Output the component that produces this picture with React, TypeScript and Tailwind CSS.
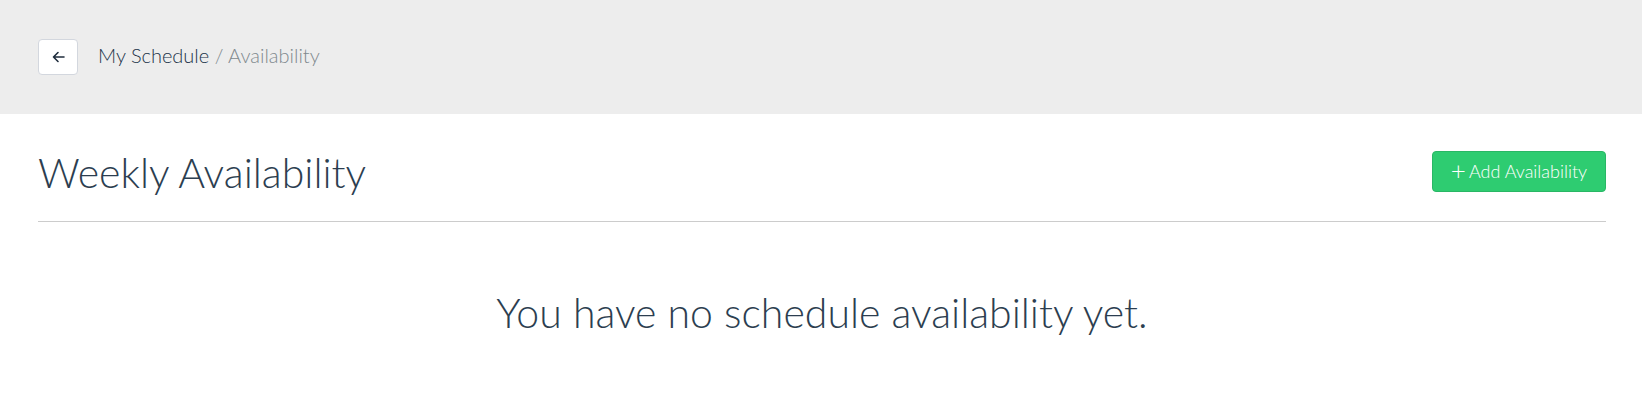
import React from "react";

export default function App() {
  return (
    <div className="min-h-[409px] bg-white" style={{ fontFamily: "Lato, 'Open Sans', sans-serif" }}>
      <div className="h-[114px] bg-[#ededed] flex items-center pl-[38px]">
        <button className="w-[40px] h-[36px] bg-white border border-[#d3d7de] rounded-[4px] flex items-center justify-center">
          <svg width="13" height="12" viewBox="0 0 13 12" fill="none" stroke="#1f2d3d" strokeWidth="1.6" strokeLinecap="round" strokeLinejoin="round">
            <path d="M12 6H1.5M6 1.5L1.5 6L6 10.5" />
          </svg>
        </button>
        <div className="ml-[20px] text-[20px] leading-none -mt-[4px] font-light">
          <span className="text-[#22344a]">My Schedule</span>
          <span className="text-[#80898d]"> / Availability</span>
        </div>
      </div>
      <div className="px-[38px] pr-[36px]">
        <div className="flex items-center justify-between h-[108px] pt-[10px] border-b border-[#cccccc]">
          <h1 className="text-[41px] font-light text-[#2c3e50] leading-none">Weekly Availability</h1>
          <button className="w-[174px] h-[41px] bg-[#2ecc71] border border-[#29b765] rounded-[4px] text-white text-[18px] font-light flex items-center justify-center -mt-[2px]">
            <span className="text-[26px] font-light leading-none mr-[3px] -mt-[3px]">+</span>Add Availability
          </button>
        </div>
        <div className="flex justify-center pt-[70px]">
          <p className="text-[41px] font-light text-[#2c3e50] leading-none">You have no schedule availability yet.</p>
        </div>
      </div>
    </div>
  );
}
